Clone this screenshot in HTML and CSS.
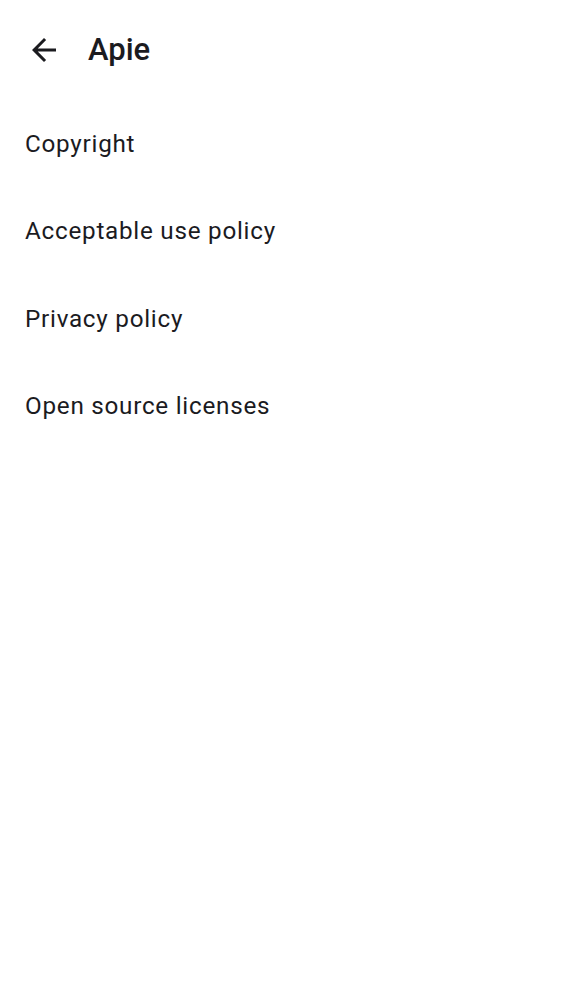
FILE: index.html
```html
<!DOCTYPE html>
<html lang="lt">
<head>
<meta charset="utf-8">
<title>Apie</title>
<link rel="stylesheet" href="styles.css">
</head>
<body>
<header class="topbar">
  <button class="back" aria-label="Back">
    <svg viewBox="0 0 24 24" width="36" height="36"><path d="M20 11H7.83l5.59-5.59L12 4l-8 8 8 8 1.41-1.41L7.83 13H20v-2z" fill="#1b1b1f"/></svg>
  </button>
  <h1 class="title">Apie</h1>
</header>
<ul class="list">
  <li class="item">Copyright</li>
  <li class="item">Acceptable use policy</li>
  <li class="item">Privacy policy</li>
  <li class="item">Open source licenses</li>
</ul>
</body>
</html>
```
FILE: styles.css
```css
html, body {
  margin: 0;
  padding: 0;
  background: #ffffff;
}
body {
  font-family: Roboto, "Noto Sans", sans-serif;
  color: #1b1b1f;
  width: 562px;
  height: 1000px;
}
.topbar {
  display: flex;
  align-items: center;
  height: 100px;
  padding-left: 26px;
  box-sizing: border-box;
}
.back {
  width: 36px;
  height: 36px;
  padding: 0;
  border: 0;
  background: none;
  display: flex;
}
.title {
  margin: 0 0 0 26px;
  font-size: 31px;
  font-weight: 500;
  line-height: 40px;
}
.list {
  list-style: none;
  margin: 0;
  padding: 0;
}
.item {
  padding: 0 25px;
  height: 87.5px;
  display: flex;
  align-items: center;
  font-size: 24.25px;
  letter-spacing: 0.74px;
  line-height: 32px;
}
```
